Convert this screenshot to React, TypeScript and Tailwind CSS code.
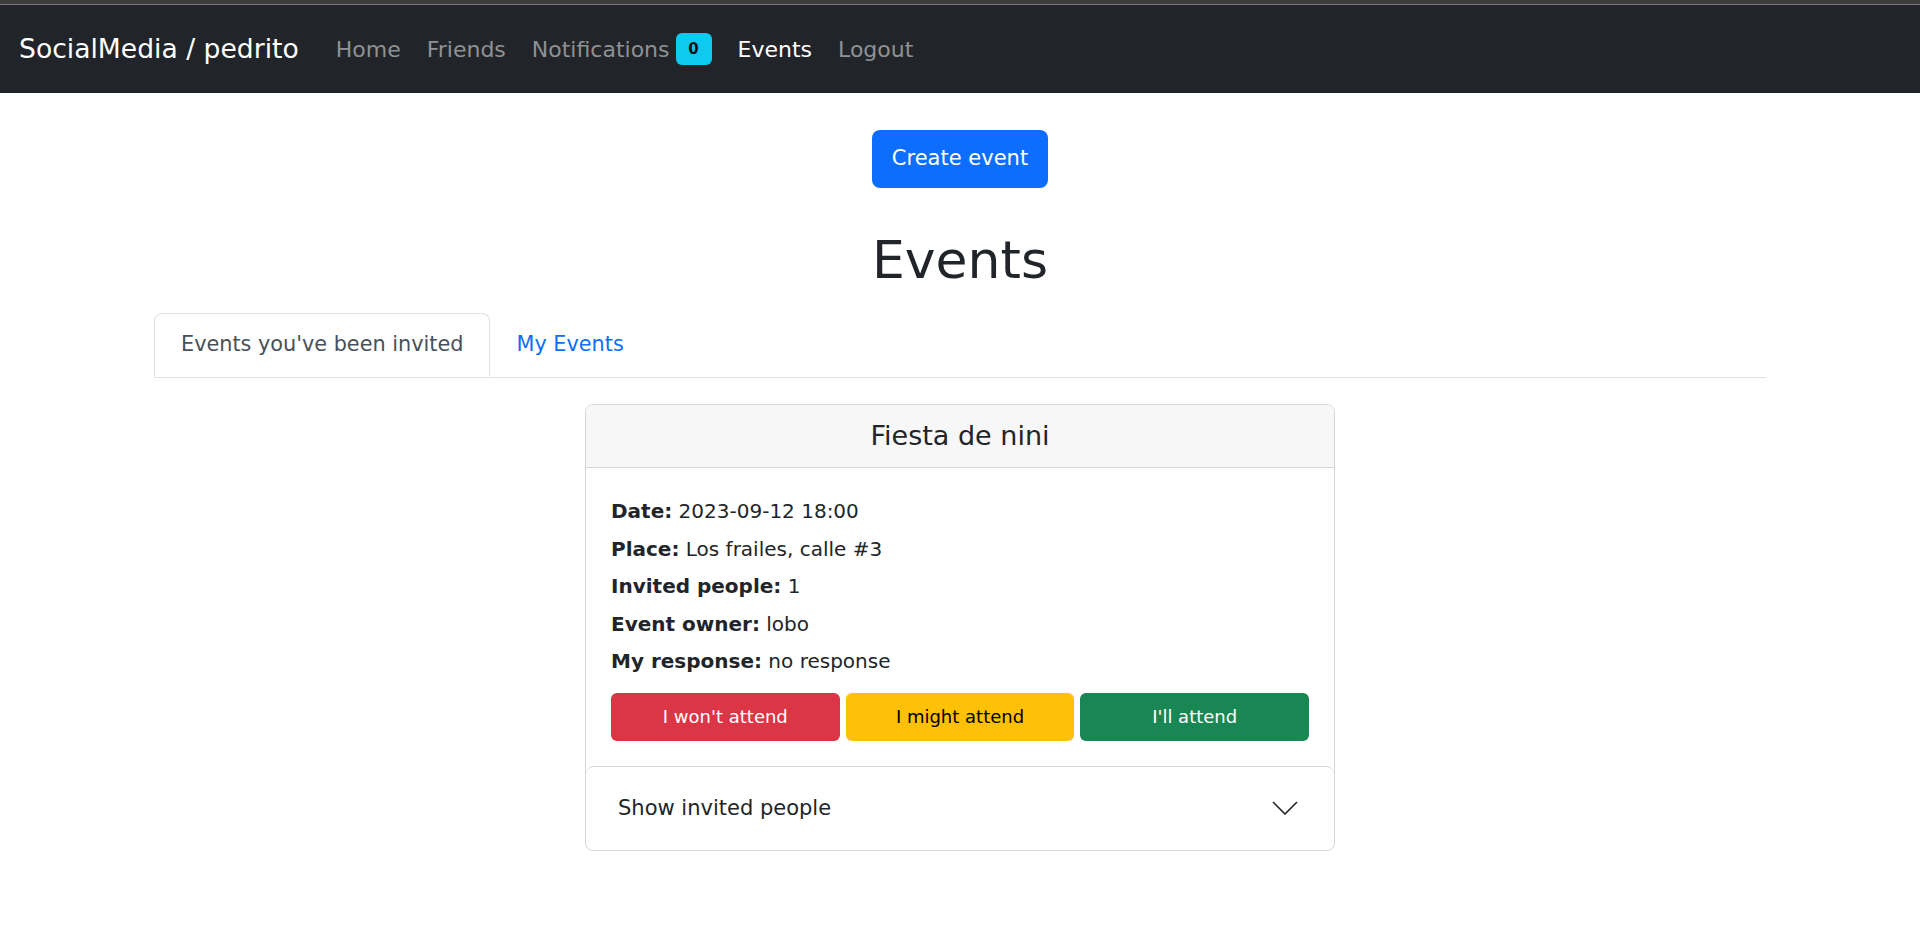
const navLinks = [
  { label: "Home", active: false },
  { label: "Friends", active: false },
  { label: "Notifications", active: false, badge: "0" },
  { label: "Events", active: true },
  { label: "Logout", active: false },
];

const details = [
  ["Date:", "2023-09-12 18:00"],
  ["Place:", "Los frailes, calle #3"],
  ["Invited people:", "1"],
  ["Event owner:", "lobo"],
  ["My response:", "no response"],
];

function Navbar() {
  return (
    <div>
      <div className="h-[4px] bg-[#3c3c3c]" />
      <div className="h-px bg-[#7b7b7b]" />
      <nav className="flex h-[88px] items-center bg-[#212529] pl-[19px]">
        <a className="mr-[24px] text-[26.6px] text-white">SocialMedia / pedrito</a>
        <ul className="flex items-center">
          {navLinks.map((l) => (
            <li key={l.label} className="flex items-center px-[13px] text-[22px]">
              <span className={l.active ? "text-white" : "text-[#8f9194]"}>{l.label}</span>
              {l.badge && (
                <span className="ml-[6px] flex h-[32px] w-[36px] items-center justify-center rounded-[6px] bg-[#0dcaf0] text-[15px] font-bold text-[#111]">
                  {l.badge}
                </span>
              )}
            </li>
          ))}
        </ul>
      </nav>
    </div>
  );
}

function EventCard() {
  return (
    <div className="mt-[26px] w-[750px] overflow-hidden rounded-[8px] border border-[#d6d6d6]">
      <div className="flex h-[63px] items-center justify-center border-b border-[#d6d6d6] bg-[#f7f7f7] text-[27px] text-[#212529]">
        Fiesta de nini
      </div>
      <div className="px-[25px] pt-[25px] pb-[25px]">
        {details.map(([k, v]) => (
          <p key={k} className="text-[20px] leading-[37.6px] text-[#212529]">
            <b className="font-bold">{k}</b> {v}
          </p>
        ))}
        <div className="mt-[12px] grid grid-cols-3 gap-[6px]">
          <button className="h-[48px] rounded-[6px] bg-[#dc3545] text-[18px] text-white">I won't attend</button>
          <button className="h-[48px] rounded-[6px] bg-[#ffc107] text-[18px] text-black">I might attend</button>
          <button className="h-[48px] rounded-[6px] bg-[#198754] text-[18px] text-white">I'll attend</button>
        </div>
      </div>
      <div className="flex h-[84px] items-center justify-between rounded-[8px] border-t border-[#d6d6d6] pl-[32px] pr-[36px]">
        <span className="text-[21px] text-[#212529]">Show invited people</span>
        <svg width="26" height="14" viewBox="0 0 26 14" fill="none" stroke="#212529" strokeWidth="1.6">
          <polyline points="1,1 13,13 25,1" />
        </svg>
      </div>
    </div>
  );
}

export default function App() {
  return (
    <div className="min-h-screen bg-white font-['DejaVu_Sans',sans-serif] text-[#212529]">
      <Navbar />
      <main className="flex flex-col items-center">
        <button className="mt-[37px] h-[58px] w-[176px] rounded-[8px] bg-[#0d6efd] text-[21px] text-white">
          Create event
        </button>
        <h1 className="mt-[40px] text-[52px] leading-[64px] text-[#212529]">Events</h1>
        <div className="mt-[21px] flex w-[1612px] border-b border-[#dee2e6]">
          <div className="-mb-px flex h-[64px] items-center rounded-t-[8px] border border-[#dee2e6] border-b-white bg-white px-[26px] text-[20.8px] text-[#495057]">
            Events you've been invited
          </div>
          <div className="flex h-[64px] items-center px-[26px] text-[20.8px] text-[#0d6efd]">My Events</div>
        </div>
        <EventCard />
      </main>
    </div>
  );
}
